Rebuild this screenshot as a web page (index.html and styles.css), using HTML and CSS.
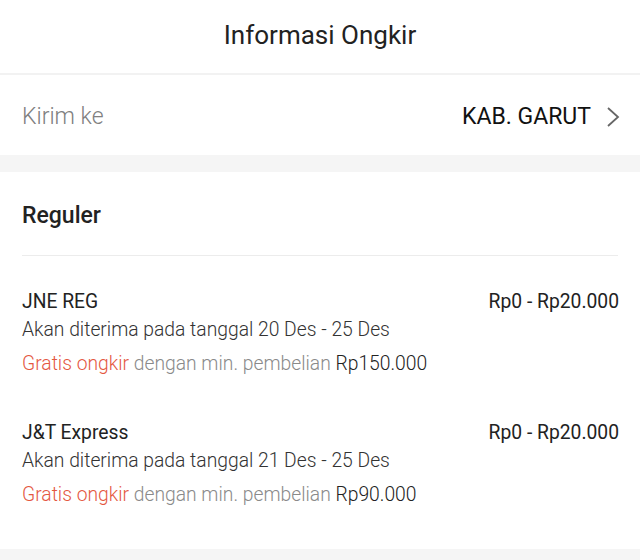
FILE: index.html
```html
<!DOCTYPE html>
<html>
<head>
<meta charset="utf-8">
<link rel="stylesheet" href="styles.css">
</head>
<body>
<div class="page">
  <header class="header">Informasi Ongkir</header>
  <div class="dest">
    <span class="dest-label">Kirim ke</span>
    <span class="dest-value">KAB. GARUT
      <svg class="chev" width="14" height="22" viewBox="0 0 14 22"><path d="M2 2 L12 11 L2 20" fill="none" stroke="#666" stroke-width="1.8"/></svg>
    </span>
  </div>
  <div class="band"></div>
  <section class="section">
    <h2 class="section-title">Reguler</h2>
    <div class="list">
      <div class="item">
        <div class="item-top"><span class="name">JNE REG</span><span class="price">Rp0 - Rp20.000</span></div>
        <div class="eta">Akan diterima pada tanggal 20 Des - 25 Des</div>
        <div class="promo"><span class="free">Gratis ongkir</span> dengan min. pembelian <span class="min">Rp150.000</span></div>
      </div>
      <div class="item">
        <div class="item-top"><span class="name">J&amp;T Express</span><span class="price">Rp0 - Rp20.000</span></div>
        <div class="eta">Akan diterima pada tanggal 21 Des - 25 Des</div>
        <div class="promo"><span class="free">Gratis ongkir</span> dengan min. pembelian <span class="min">Rp90.000</span></div>
      </div>
    </div>
  </section>
  <div class="band band-bottom"></div>
</div>
</body>
</html>
```
FILE: styles.css
```css
* { box-sizing: border-box; }
html, body { margin: 0; padding: 0; background: #fff; }
body { font-family: Roboto, "Noto Sans", sans-serif; color: #222; }
.page { width: 640px; height: 560px; overflow: hidden; }
.header {
  height: 75px;
  display: flex; align-items: center; justify-content: center;
  font-size: 26px; color: #222;
  border-bottom: 2px solid #f2f2f2;
  padding-bottom: 4px;
}
.dest {
  height: 80px;
  display: flex; align-items: center; justify-content: space-between;
  padding: 3px 20px 0 22px;
}
.dest-label { font-size: 23px; color: #808080; font-weight: 300; }
.dest-value { font-size: 23px; color: #111; display: flex; align-items: center; gap: 15px; }
.chev { display: block; }
.band { height: 17px; background: #f5f5f5; }
.section { padding: 0 22px 0 22px; }
.section-title {
  margin: 0; font-size: 23px; font-weight: 500; color: #222;
  height: 84px; display: flex; align-items: center;
  border-bottom: 1px solid #ececec;
  padding-top: 3px;
}
.list { padding-top: 32px; display: flex; flex-direction: column; gap: 38px; padding-bottom: 37px; }
.item { display: flex; flex-direction: column; }
.item-top { display: flex; justify-content: space-between; font-size: 19.3px; color: #222; line-height: 28px; }
.price { margin-right: -1px; }
.eta { font-size: 19.3px; color: #333; line-height: 28px; font-weight: 300; }
.promo { font-size: 19.3px; color: #8a8a8a; line-height: 34px; font-weight: 300; padding-top: 3px; }
.free { color: #e4583f; }
.min { color: #222; }
```
